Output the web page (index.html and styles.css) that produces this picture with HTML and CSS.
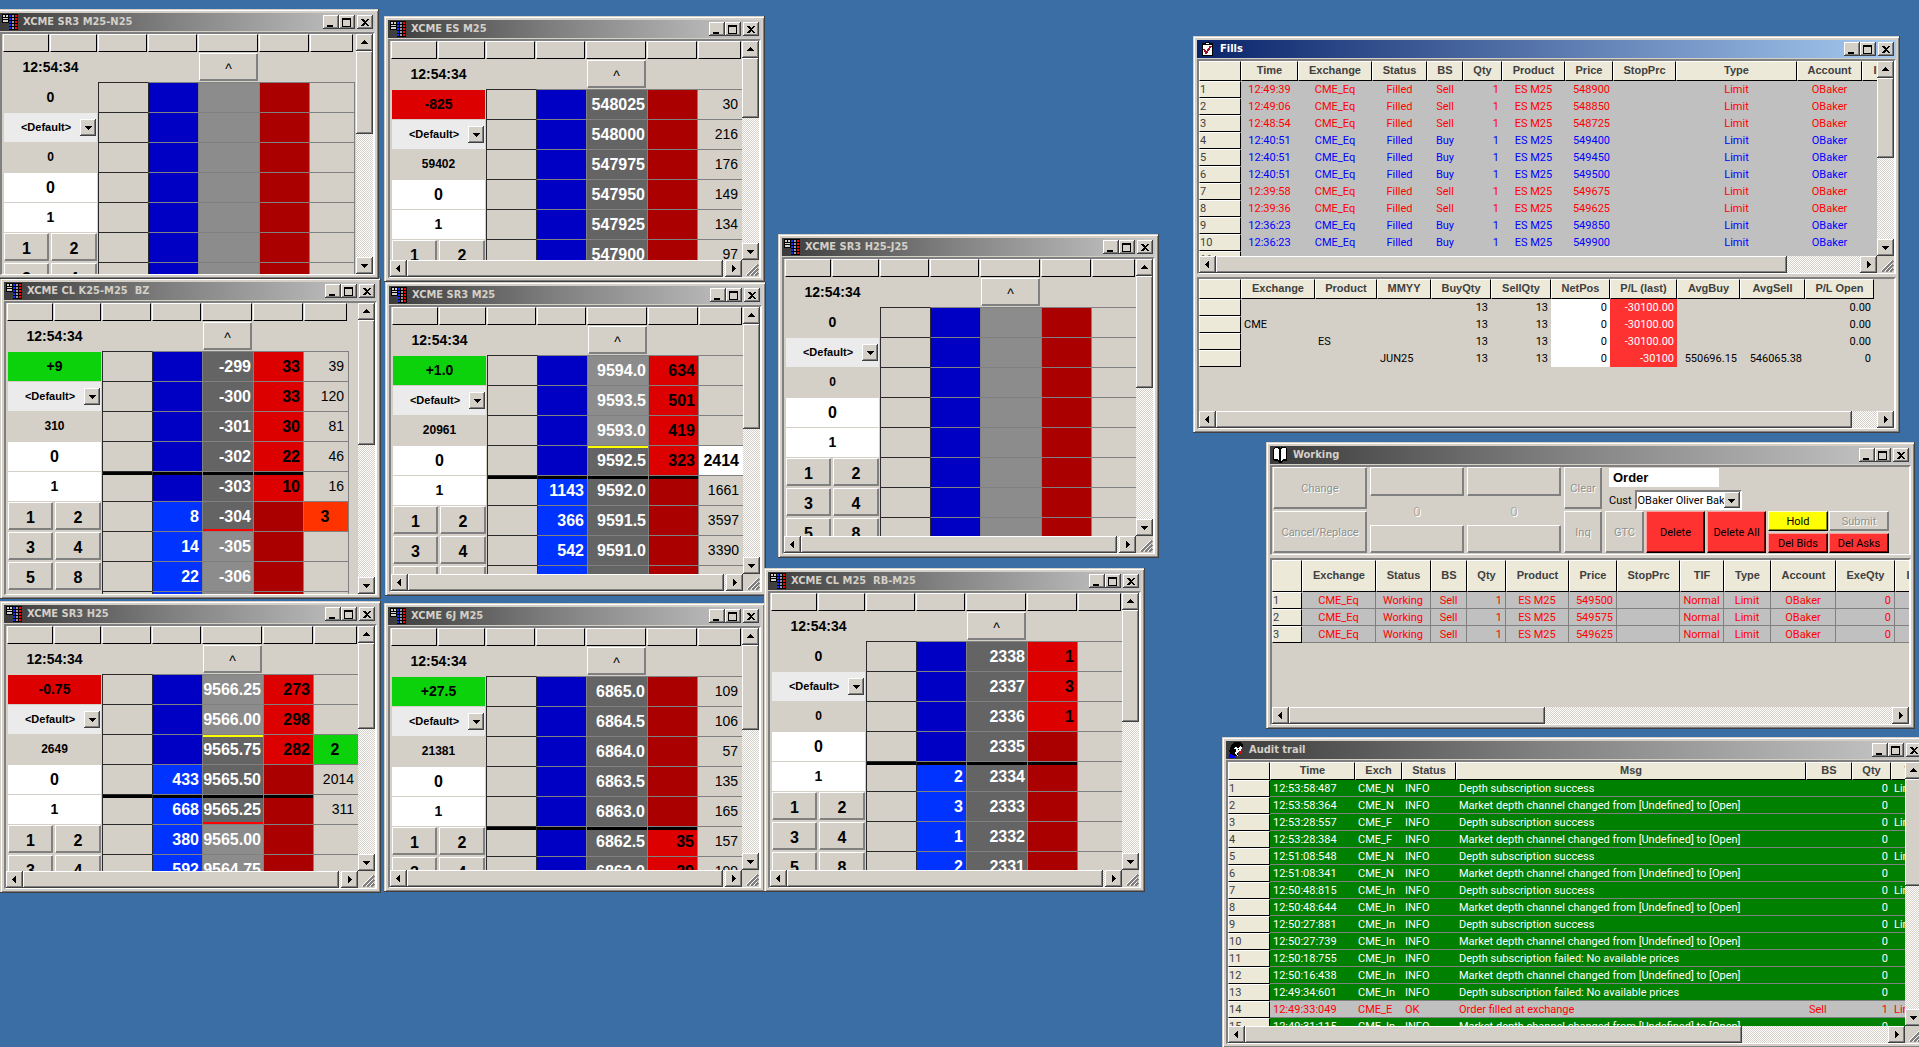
FILE: index.html
```html
<!DOCTYPE html>
<html lang="en">
<head>
<meta charset="utf-8">
<meta name="viewport" content="width=device-width, initial-scale=1">
<title>Trading desktop</title>
<link rel="stylesheet" href="styles.css">
</head>
<body>
<svg class="sprite" aria-hidden="true">
  <symbol id="i-ladder" viewBox="0 0 16 16">
    <path fill="#000" d="M0 0h7v9H0zM7 0h9v16H7z"/>
    <path fill="#d4d0c8" d="M1 1h2v2H1zM4 1h2v2H4zM1 4h5v1H1zM1 6h5v2H1z"/>
    <path fill="#1030ff" d="M7 1h2v2H7zM7 4h2v2H7zM7 7h2v2H7zM7 10h2v2H7zM7 13h2v2H7z"/>
    <path fill="#999" d="M10 1h2v2h-2zM10 4h2v2h-2zM10 7h2v2h-2zM10 10h2v2h-2zM10 13h2v2h-2z"/>
    <path fill="#f00" d="M13 1h2v2h-2zM13 4h2v2h-2zM13 7h2v2h-2zM13 10h2v2h-2zM13 13h2v2h-2z"/>
  </symbol>
  <symbol id="i-check" viewBox="0 0 16 16">
    <path fill="#000" d="M3 2h3V1h5v1h3v13H3z"/>
    <path fill="#fff" d="M4 4h9v10H4zM7 2h3v1H7z"/>
    <path fill="none" stroke="#a01020" stroke-width="2" d="M5 8l2 4 5-7"/>
  </symbol>
  <symbol id="i-book" viewBox="0 0 16 16">
    <path fill="#000" d="M1 2l2-2h4l1 1 1-1h4l2 2v11l-1 1h-3l-2 2H7l-2-2H2l-1-1z"/>
    <path fill="#fff" d="M2 2l1-1h3l1 2v11l-2-2H2zM14 2l-1-1h-3L9 3v11l2-2h3z"/>
  </symbol>
  <symbol id="i-sleuth" viewBox="0 0 16 16">
    <path fill="#000" d="M4 2l3-2h5l3 3-1 4-3 2-2 5H3L1 9z"/>
    <path fill="#fff" d="M6 6l2-1 2 1 2-2 2 1-1 4-3 1-1 2 1 2-2-1-1-2 1-2z"/>
    <path fill="#000" d="M7 7h1v2H7zM10 7h1v1h-1z"/>
    <path fill="#00f" d="M1 12l5 1 2 3H1z"/>
    <path fill="#e00" d="M11 9h3v3h-3z"/>
  </symbol>
  <symbol id="i-min" viewBox="0 0 10 10"><path d="M1 8h6v2H1z"/></symbol>
  <symbol id="i-max" viewBox="0 0 10 10"><path fill-rule="evenodd" d="M0 1h9v9H0zM1 3v6h7V3z"/></symbol>
  <symbol id="i-close" viewBox="0 0 10 10"><path d="M1 2h2l2 2 2-2h2L6 5.500l3 3.500H7L5 7 3 9H1l3-3.500z"/></symbol>
  <symbol id="i-up" viewBox="0 0 9 9"><path d="M1 6h7L4.500 2z"/></symbol>
  <symbol id="i-down" viewBox="0 0 9 9"><path d="M1 3h7L4.500 7z"/></symbol>
  <symbol id="i-left" viewBox="0 0 9 9"><path d="M6 1v7L2 4.500z"/></symbol>
  <symbol id="i-right" viewBox="0 0 9 9"><path d="M3 1v7l4-3.500z"/></symbol>
  <symbol id="i-grip" viewBox="0 0 14 14">
    <path stroke="#fff" d="M1 12L12 1M5 12l7-7M9 12l3-3"/>
    <path stroke="#808080" stroke-width="2" d="M2 13L13 2M6 13l7-7M10 13l3-3"/>
  </symbol>
</svg>

<main class="desktop">

<section class="win win-k25 ladder-narrow">
  <header class="titlebar"><svg class="app"><use href="#i-ladder"/></svg><h2>XCME CL K25-M25&nbsp; BZ</h2><div class="winbtns"><button aria-label="Minimize"><svg><use href="#i-min"/></svg></button><button aria-label="Maximize"><svg><use href="#i-max"/></svg></button><button aria-label="Close"><svg><use href="#i-close"/></svg></button></div></header>
  <div class="pane">
    <div class="view">
      <div class="colheads"><i></i><i></i><i></i><i></i><i></i><i></i><i></i></div>
      <div class="ladder">
        <div class="side"><div class="time">12:54:34</div><div class="chg up">+9</div>
          <label class="acct"><select aria-label="Account"><option>&lt;Default&gt;</option></select><span class="drop"><svg><use href="#i-down"/></svg></span></label>
          <div class="vol">310</div><div class="pos">0</div><div class="qty">1</div>
          <button>1</button><button>2</button><button>3</button><button>4</button><button>5</button><button>8</button></div>
        <table class="book">
          <colgroup><col class="c-a"><col class="c-b"><col class="c-p"><col class="c-s"><col class="c-v"></colgroup>
          <thead><tr><th></th><th></th><th><button>^</button></th><th></th><th></th></tr></thead>
          <tbody>
            <tr><td></td><td></td><td>-299</td><td class="on">33</td><td>39</td></tr>
            <tr><td></td><td></td><td>-300</td><td class="on">33</td><td>120</td></tr>
            <tr><td></td><td></td><td>-301</td><td class="on">30</td><td>81</td></tr>
            <tr><td></td><td></td><td>-302</td><td class="on">22</td><td>46</td></tr>
            <tr class="mark"><td></td><td></td><td>-303</td><td class="on">10</td><td>16</td></tr>
            <tr><td></td><td class="on">8</td><td class="low">-304</td><td></td><td class="last sold">3</td></tr>
            <tr><td></td><td class="on">14</td><td class="far">-305</td><td></td><td></td></tr>
            <tr><td></td><td class="on">22</td><td class="far">-306</td><td></td><td></td></tr>
            <tr><td></td><td class="on"></td><td class="far"></td><td></td><td></td></tr>
          </tbody>
        </table>
      </div>
    </div>
    <div class="vscroll"><button aria-label="Up"><svg><use href="#i-up"/></svg></button><span class="thumb" style="--len:125px"></span><button aria-label="Down"><svg><use href="#i-down"/></svg></button></div>
  </div>
</section>

<section class="win win-n25">
  <header class="titlebar"><svg class="app"><use href="#i-ladder"/></svg><h2>XCME SR3 M25-N25</h2><div class="winbtns"><button aria-label="Minimize"><svg><use href="#i-min"/></svg></button><button aria-label="Maximize"><svg><use href="#i-max"/></svg></button><button aria-label="Close"><svg><use href="#i-close"/></svg></button></div></header>
  <div class="pane">
    <div class="view">
      <div class="colheads"><i></i><i></i><i></i><i></i><i></i><i></i><i></i></div>
      <div class="ladder">
        <div class="side"><div class="time">12:54:34</div><div class="chg">0</div>
          <label class="acct"><select aria-label="Account"><option>&lt;Default&gt;</option></select><span class="drop"><svg><use href="#i-down"/></svg></span></label>
          <div class="vol">0</div><div class="pos">0</div><div class="qty">1</div>
          <button>1</button><button>2</button><button>3</button><button>4</button></div>
        <table class="book">
          <colgroup><col class="c-a"><col class="c-b"><col class="c-p"><col class="c-s"><col class="c-v"></colgroup>
          <thead><tr><th></th><th></th><th><button>^</button></th><th></th><th></th></tr></thead>
          <tbody>
            <tr><td></td><td></td><td class="far"></td><td></td><td></td></tr>
            <tr><td></td><td></td><td class="far"></td><td></td><td></td></tr>
            <tr><td></td><td></td><td class="far"></td><td></td><td></td></tr>
            <tr><td></td><td></td><td class="far"></td><td></td><td></td></tr>
            <tr><td></td><td></td><td class="far"></td><td></td><td></td></tr>
            <tr><td></td><td></td><td class="far"></td><td></td><td></td></tr>
            <tr><td></td><td></td><td class="far"></td><td></td><td></td></tr>
          </tbody>
        </table>
      </div>
    </div>
    <div class="vscroll"><button aria-label="Up"><svg><use href="#i-up"/></svg></button><span class="thumb" style="--len:83px"></span><button aria-label="Down"><svg><use href="#i-down"/></svg></button></div>
  </div>
</section>

<section class="win win-es">
  <header class="titlebar"><svg class="app"><use href="#i-ladder"/></svg><h2>XCME ES M25</h2><div class="winbtns"><button aria-label="Minimize"><svg><use href="#i-min"/></svg></button><button aria-label="Maximize"><svg><use href="#i-max"/></svg></button><button aria-label="Close"><svg><use href="#i-close"/></svg></button></div></header>
  <div class="pane">
    <div class="view">
      <div class="colheads"><i></i><i></i><i></i><i></i><i></i><i></i><i></i></div>
      <div class="ladder">
        <div class="side"><div class="time">12:54:34</div><div class="chg down">-825</div>
          <label class="acct"><select aria-label="Account"><option>&lt;Default&gt;</option></select><span class="drop"><svg><use href="#i-down"/></svg></span></label>
          <div class="vol">59402</div><div class="pos">0</div><div class="qty">1</div>
          <button>1</button><button>2</button></div>
        <table class="book">
          <colgroup><col class="c-a"><col class="c-b"><col class="c-p"><col class="c-s"><col class="c-v"></colgroup>
          <thead><tr><th></th><th></th><th><button>^</button></th><th></th><th></th></tr></thead>
          <tbody>
            <tr><td></td><td></td><td>548025</td><td></td><td>30</td></tr>
            <tr><td></td><td></td><td>548000</td><td></td><td>216</td></tr>
            <tr><td></td><td></td><td>547975</td><td></td><td>176</td></tr>
            <tr><td></td><td></td><td>547950</td><td></td><td>149</td></tr>
            <tr><td></td><td></td><td>547925</td><td></td><td>134</td></tr>
            <tr><td></td><td></td><td>547900</td><td></td><td>97</td></tr>
          </tbody>
        </table>
      </div>
    </div>
    <div class="vscroll"><button aria-label="Up"><svg><use href="#i-up"/></svg></button><span class="thumb" style="--len:60px"></span><button aria-label="Down"><svg><use href="#i-down"/></svg></button></div>
    <div class="hscroll"><button aria-label="Left"><svg><use href="#i-left"/></svg></button><span class="thumb full"></span><button aria-label="Right"><svg><use href="#i-right"/></svg></button></div>
    <svg class="grip"><use href="#i-grip"/></svg>
  </div>
</section>

<section class="win win-m25">
  <header class="titlebar"><svg class="app"><use href="#i-ladder"/></svg><h2>XCME SR3 M25</h2><div class="winbtns"><button aria-label="Minimize"><svg><use href="#i-min"/></svg></button><button aria-label="Maximize"><svg><use href="#i-max"/></svg></button><button aria-label="Close"><svg><use href="#i-close"/></svg></button></div></header>
  <div class="pane">
    <div class="view">
      <div class="colheads"><i></i><i></i><i></i><i></i><i></i><i></i><i></i></div>
      <div class="ladder">
        <div class="side"><div class="time">12:54:34</div><div class="chg up">+1.0</div>
          <label class="acct"><select aria-label="Account"><option>&lt;Default&gt;</option></select><span class="drop"><svg><use href="#i-down"/></svg></span></label>
          <div class="vol">20961</div><div class="pos">0</div><div class="qty">1</div>
          <button>1</button><button>2</button><button>3</button><button>4</button><button aria-label="5"></button><button aria-label="8"></button></div>
        <table class="book">
          <colgroup><col class="c-a"><col class="c-b"><col class="c-p"><col class="c-s"><col class="c-v"></colgroup>
          <thead><tr><th></th><th></th><th><button>^</button></th><th></th><th></th></tr></thead>
          <tbody>
            <tr><td></td><td></td><td class="far">9594.0</td><td class="on">634</td><td></td></tr>
            <tr><td></td><td></td><td class="far">9593.5</td><td class="on">501</td><td></td></tr>
            <tr><td></td><td></td><td class="far">9593.0</td><td class="on">419</td><td></td></tr>
            <tr><td></td><td></td><td class="high">9592.5</td><td class="on">323</td><td class="last same">2414</td></tr>
            <tr class="mark"><td></td><td class="on">1143</td><td>9592.0</td><td></td><td>1661</td></tr>
            <tr><td></td><td class="on">366</td><td>9591.5</td><td></td><td>3597</td></tr>
            <tr><td></td><td class="on">542</td><td>9591.0</td><td></td><td>3390</td></tr>
            <tr><td></td><td class="on"></td><td></td><td></td><td></td></tr>
          </tbody>
        </table>
      </div>
    </div>
    <div class="vscroll"><button aria-label="Up"><svg><use href="#i-up"/></svg></button><span class="thumb" style="--len:105px"></span><button aria-label="Down"><svg><use href="#i-down"/></svg></button></div>
    <div class="hscroll"><button aria-label="Left"><svg><use href="#i-left"/></svg></button><span class="thumb full"></span><button aria-label="Right"><svg><use href="#i-right"/></svg></button></div>
    <svg class="grip"><use href="#i-grip"/></svg>
  </div>
</section>

<section class="win win-h25">
  <header class="titlebar"><svg class="app"><use href="#i-ladder"/></svg><h2>XCME SR3 H25</h2><div class="winbtns"><button aria-label="Minimize"><svg><use href="#i-min"/></svg></button><button aria-label="Maximize"><svg><use href="#i-max"/></svg></button><button aria-label="Close"><svg><use href="#i-close"/></svg></button></div></header>
  <div class="pane">
    <div class="view">
      <div class="colheads"><i></i><i></i><i></i><i></i><i></i><i></i><i></i></div>
      <div class="ladder">
        <div class="side"><div class="time">12:54:34</div><div class="chg down">-0.75</div>
          <label class="acct"><select aria-label="Account"><option>&lt;Default&gt;</option></select><span class="drop"><svg><use href="#i-down"/></svg></span></label>
          <div class="vol">2649</div><div class="pos">0</div><div class="qty">1</div>
          <button>1</button><button>2</button><button>3</button><button>4</button></div>
        <table class="book">
          <colgroup><col class="c-a"><col class="c-b"><col class="c-p"><col class="c-s"><col class="c-v"></colgroup>
          <thead><tr><th></th><th></th><th><button>^</button></th><th></th><th></th></tr></thead>
          <tbody>
            <tr><td></td><td></td><td class="far">9566.25</td><td class="on">273</td><td></td></tr>
            <tr><td></td><td></td><td class="far">9566.00</td><td class="on">298</td><td></td></tr>
            <tr><td></td><td></td><td class="high">9565.75</td><td class="on">282</td><td class="last bought">2</td></tr>
            <tr><td></td><td class="on">433</td><td>9565.50</td><td></td><td>2014</td></tr>
            <tr class="mark"><td></td><td class="on">668</td><td class="low">9565.25</td><td></td><td>311</td></tr>
            <tr><td></td><td class="on">380</td><td class="far">9565.00</td><td></td><td></td></tr>
            <tr><td></td><td class="on">592</td><td class="far">9564.75</td><td></td><td></td></tr>
          </tbody>
        </table>
      </div>
    </div>
    <div class="vscroll"><button aria-label="Up"><svg><use href="#i-up"/></svg></button><span class="thumb" style="--len:86px"></span><button aria-label="Down"><svg><use href="#i-down"/></svg></button></div>
    <div class="hscroll"><button aria-label="Left"><svg><use href="#i-left"/></svg></button><span class="thumb full"></span><button aria-label="Right"><svg><use href="#i-right"/></svg></button></div>
    <svg class="grip"><use href="#i-grip"/></svg>
  </div>
</section>

<section class="win win-6j">
  <header class="titlebar"><svg class="app"><use href="#i-ladder"/></svg><h2>XCME 6J M25</h2><div class="winbtns"><button aria-label="Minimize"><svg><use href="#i-min"/></svg></button><button aria-label="Maximize"><svg><use href="#i-max"/></svg></button><button aria-label="Close"><svg><use href="#i-close"/></svg></button></div></header>
  <div class="pane">
    <div class="view">
      <div class="colheads"><i></i><i></i><i></i><i></i><i></i><i></i><i></i></div>
      <div class="ladder">
        <div class="side"><div class="time">12:54:34</div><div class="chg up">+27.5</div>
          <label class="acct"><select aria-label="Account"><option>&lt;Default&gt;</option></select><span class="drop"><svg><use href="#i-down"/></svg></span></label>
          <div class="vol">21381</div><div class="pos">0</div><div class="qty">1</div>
          <button>1</button><button>2</button><button>3</button><button>4</button></div>
        <table class="book">
          <colgroup><col class="c-a"><col class="c-b"><col class="c-p"><col class="c-s"><col class="c-v"></colgroup>
          <thead><tr><th></th><th></th><th><button>^</button></th><th></th><th></th></tr></thead>
          <tbody>
            <tr><td></td><td></td><td>6865.0</td><td></td><td>109</td></tr>
            <tr><td></td><td></td><td>6864.5</td><td></td><td>106</td></tr>
            <tr><td></td><td></td><td>6864.0</td><td></td><td>57</td></tr>
            <tr><td></td><td></td><td>6863.5</td><td></td><td>135</td></tr>
            <tr><td></td><td></td><td>6863.0</td><td></td><td>165</td></tr>
            <tr class="mark"><td></td><td></td><td>6862.5</td><td class="on">35</td><td>157</td></tr>
            <tr><td></td><td></td><td>6862.0</td><td class="on">39</td><td>199</td></tr>
          </tbody>
        </table>
      </div>
    </div>
    <div class="vscroll"><button aria-label="Up"><svg><use href="#i-up"/></svg></button><span class="thumb" style="--len:85px"></span><button aria-label="Down"><svg><use href="#i-down"/></svg></button></div>
    <div class="hscroll"><button aria-label="Left"><svg><use href="#i-left"/></svg></button><span class="thumb full"></span><button aria-label="Right"><svg><use href="#i-right"/></svg></button></div>
    <svg class="grip"><use href="#i-grip"/></svg>
  </div>
</section>

<section class="win win-j25">
  <header class="titlebar"><svg class="app"><use href="#i-ladder"/></svg><h2>XCME SR3 H25-J25</h2><div class="winbtns"><button aria-label="Minimize"><svg><use href="#i-min"/></svg></button><button aria-label="Maximize"><svg><use href="#i-max"/></svg></button><button aria-label="Close"><svg><use href="#i-close"/></svg></button></div></header>
  <div class="pane">
    <div class="view">
      <div class="colheads"><i></i><i></i><i></i><i></i><i></i><i></i><i></i></div>
      <div class="ladder">
        <div class="side"><div class="time">12:54:34</div><div class="chg">0</div>
          <label class="acct"><select aria-label="Account"><option>&lt;Default&gt;</option></select><span class="drop"><svg><use href="#i-down"/></svg></span></label>
          <div class="vol">0</div><div class="pos">0</div><div class="qty">1</div>
          <button>1</button><button>2</button><button>3</button><button>4</button><button>5</button><button>8</button></div>
        <table class="book">
          <colgroup><col class="c-a"><col class="c-b"><col class="c-p"><col class="c-s"><col class="c-v"></colgroup>
          <thead><tr><th></th><th></th><th><button>^</button></th><th></th><th></th></tr></thead>
          <tbody>
            <tr><td></td><td></td><td class="far"></td><td></td><td></td></tr>
            <tr><td></td><td></td><td class="far"></td><td></td><td></td></tr>
            <tr><td></td><td></td><td class="far"></td><td></td><td></td></tr>
            <tr><td></td><td></td><td class="far"></td><td></td><td></td></tr>
            <tr><td></td><td></td><td class="far"></td><td></td><td></td></tr>
            <tr><td></td><td></td><td class="far"></td><td></td><td></td></tr>
            <tr><td></td><td></td><td class="far"></td><td></td><td></td></tr>
            <tr><td></td><td></td><td class="far"></td><td></td><td></td></tr>
          </tbody>
        </table>
      </div>
    </div>
    <div class="vscroll"><button aria-label="Up"><svg><use href="#i-up"/></svg></button><span class="thumb" style="--len:112px"></span><button aria-label="Down"><svg><use href="#i-down"/></svg></button></div>
    <div class="hscroll"><button aria-label="Left"><svg><use href="#i-left"/></svg></button><span class="thumb full"></span><button aria-label="Right"><svg><use href="#i-right"/></svg></button></div>
    <svg class="grip"><use href="#i-grip"/></svg>
  </div>
</section>

<section class="win win-rb">
  <header class="titlebar"><svg class="app"><use href="#i-ladder"/></svg><h2>XCME CL M25&nbsp; RB-M25</h2><div class="winbtns"><button aria-label="Minimize"><svg><use href="#i-min"/></svg></button><button aria-label="Maximize"><svg><use href="#i-max"/></svg></button><button aria-label="Close"><svg><use href="#i-close"/></svg></button></div></header>
  <div class="pane">
    <div class="view">
      <div class="colheads"><i></i><i></i><i></i><i></i><i></i><i></i><i></i></div>
      <div class="ladder">
        <div class="side"><div class="time">12:54:34</div><div class="chg">0</div>
          <label class="acct"><select aria-label="Account"><option>&lt;Default&gt;</option></select><span class="drop"><svg><use href="#i-down"/></svg></span></label>
          <div class="vol">0</div><div class="pos">0</div><div class="qty">1</div>
          <button>1</button><button>2</button><button>3</button><button>4</button><button>5</button><button>8</button></div>
        <table class="book">
          <colgroup><col class="c-a"><col class="c-b"><col class="c-p"><col class="c-s"><col class="c-v"></colgroup>
          <thead><tr><th></th><th></th><th><button>^</button></th><th></th><th></th></tr></thead>
          <tbody>
            <tr><td></td><td></td><td>2338</td><td class="on">1</td><td></td></tr>
            <tr><td></td><td></td><td>2337</td><td class="on">3</td><td></td></tr>
            <tr><td></td><td></td><td>2336</td><td class="on">1</td><td></td></tr>
            <tr><td></td><td></td><td>2335</td><td></td><td></td></tr>
            <tr class="mark"><td></td><td class="on">2</td><td>2334</td><td></td><td></td></tr>
            <tr><td></td><td class="on">3</td><td>2333</td><td></td><td></td></tr>
            <tr><td></td><td class="on">1</td><td>2332</td><td></td><td></td></tr>
            <tr><td></td><td class="on">2</td><td>2331</td><td></td><td></td></tr>
          </tbody>
        </table>
      </div>
    </div>
    <div class="vscroll"><button aria-label="Up"><svg><use href="#i-up"/></svg></button><span class="thumb" style="--len:112px"></span><button aria-label="Down"><svg><use href="#i-down"/></svg></button></div>
    <div class="hscroll"><button aria-label="Left"><svg><use href="#i-left"/></svg></button><span class="thumb full"></span><button aria-label="Right"><svg><use href="#i-right"/></svg></button></div>
    <svg class="grip"><use href="#i-grip"/></svg>
  </div>
</section>

<section class="win win-fills">
  <header class="titlebar active"><svg class="app"><use href="#i-check"/></svg><h2>Fills</h2><div class="winbtns"><button aria-label="Minimize"><svg><use href="#i-min"/></svg></button><button aria-label="Maximize"><svg><use href="#i-max"/></svg></button><button aria-label="Close"><svg><use href="#i-close"/></svg></button></div></header>
  <div class="pane fills-pane">
    <div class="view silver">
      <table class="data t-fills">
        <colgroup><col class="w42"><col class="w57"><col class="w74"><col class="w55"><col class="w36"><col class="w39"><col class="w63"><col class="w48"><col class="w63"><col class="w121"><col class="w65"><col class="w34"></colgroup>
        <thead><tr><th></th><th>Time</th><th>Exchange</th><th>Status</th><th>BS</th><th>Qty</th><th>Product</th><th>Price</th><th>StopPrc</th><th>Type</th><th>Account</th><th>ID</th></tr></thead>
        <tbody>
          <tr class="sell"><th>1</th><td>12:49:39</td><td>CME_Eq</td><td>Filled</td><td>Sell</td><td class="r">1</td><td>ES M25</td><td class="r">548900</td><td></td><td>Limit</td><td>OBaker</td><td></td></tr>
          <tr class="sell"><th>2</th><td>12:49:06</td><td>CME_Eq</td><td>Filled</td><td>Sell</td><td class="r">1</td><td>ES M25</td><td class="r">548850</td><td></td><td>Limit</td><td>OBaker</td><td></td></tr>
          <tr class="sell"><th>3</th><td>12:48:54</td><td>CME_Eq</td><td>Filled</td><td>Sell</td><td class="r">1</td><td>ES M25</td><td class="r">548725</td><td></td><td>Limit</td><td>OBaker</td><td></td></tr>
          <tr class="buy"><th>4</th><td>12:40:51</td><td>CME_Eq</td><td>Filled</td><td>Buy</td><td class="r">1</td><td>ES M25</td><td class="r">549400</td><td></td><td>Limit</td><td>OBaker</td><td></td></tr>
          <tr class="buy"><th>5</th><td>12:40:51</td><td>CME_Eq</td><td>Filled</td><td>Buy</td><td class="r">1</td><td>ES M25</td><td class="r">549450</td><td></td><td>Limit</td><td>OBaker</td><td></td></tr>
          <tr class="buy"><th>6</th><td>12:40:51</td><td>CME_Eq</td><td>Filled</td><td>Buy</td><td class="r">1</td><td>ES M25</td><td class="r">549500</td><td></td><td>Limit</td><td>OBaker</td><td></td></tr>
          <tr class="sell"><th>7</th><td>12:39:58</td><td>CME_Eq</td><td>Filled</td><td>Sell</td><td class="r">1</td><td>ES M25</td><td class="r">549675</td><td></td><td>Limit</td><td>OBaker</td><td></td></tr>
          <tr class="sell"><th>8</th><td>12:39:36</td><td>CME_Eq</td><td>Filled</td><td>Sell</td><td class="r">1</td><td>ES M25</td><td class="r">549625</td><td></td><td>Limit</td><td>OBaker</td><td></td></tr>
          <tr class="buy"><th>9</th><td>12:36:23</td><td>CME_Eq</td><td>Filled</td><td>Buy</td><td class="r">1</td><td>ES M25</td><td class="r">549850</td><td></td><td>Limit</td><td>OBaker</td><td></td></tr>
          <tr class="buy"><th>10</th><td>12:36:23</td><td>CME_Eq</td><td>Filled</td><td>Buy</td><td class="r">1</td><td>ES M25</td><td class="r">549900</td><td></td><td>Limit</td><td>OBaker</td><td></td></tr>
          <tr><th>11</th><td></td><td></td><td></td><td></td><td></td><td></td><td></td><td></td><td></td><td></td><td></td></tr>
        </tbody>
      </table>
    </div>
    <div class="vscroll"><button aria-label="Up"><svg><use href="#i-up"/></svg></button><span class="thumb" style="--len:80px"></span><button aria-label="Down"><svg><use href="#i-down"/></svg></button></div>
    <div class="hscroll"><button aria-label="Left"><svg><use href="#i-left"/></svg></button><span class="thumb" style="--len:571px"></span><button aria-label="Right"><svg><use href="#i-right"/></svg></button></div>
    <svg class="grip"><use href="#i-grip"/></svg>
  </div>
  <div class="pane pane-wide">
    <div class="view">
      <table class="data t-pl">
        <colgroup><col class="w42"><col class="w74"><col class="w62"><col class="w54"><col class="w60"><col class="w60"><col class="w59"><col class="w67"><col class="w63"><col class="w65"><col class="w69"></colgroup>
        <thead><tr><th></th><th>Exchange</th><th>Product</th><th>MMYY</th><th>BuyQty</th><th>SellQty</th><th>NetPos</th><th>P/L (last)</th><th>AvgBuy</th><th>AvgSell</th><th>P/L Open</th></tr></thead>
        <tbody>
          <tr><th></th><td></td><td></td><td></td><td>13</td><td>13</td><td class="net">0</td><td class="loss">-30100.00</td><td></td><td></td><td>0.00</td></tr>
          <tr><th></th><td class="l">CME</td><td></td><td></td><td>13</td><td>13</td><td class="net">0</td><td class="loss">-30100.00</td><td></td><td></td><td>0.00</td></tr>
          <tr><th></th><td></td><td class="l">ES</td><td></td><td>13</td><td>13</td><td class="net">0</td><td class="loss">-30100.00</td><td></td><td></td><td>0.00</td></tr>
          <tr><th></th><td></td><td></td><td class="l">JUN25</td><td>13</td><td>13</td><td class="net">0</td><td class="loss">-30100</td><td>550696.15</td><td>546065.38</td><td>0</td></tr>
        </tbody>
      </table>
    </div>
    <div class="hscroll"><button aria-label="Left"><svg><use href="#i-left"/></svg></button><span class="thumb" style="--len:636px"></span><button aria-label="Right"><svg><use href="#i-right"/></svg></button></div>
  </div>
</section>

<section class="win win-working">
  <header class="titlebar"><svg class="app"><use href="#i-book"/></svg><h2>Working</h2><div class="winbtns"><button aria-label="Minimize"><svg><use href="#i-min"/></svg></button><button aria-label="Maximize"><svg><use href="#i-max"/></svg></button><button aria-label="Close"><svg><use href="#i-close"/></svg></button></div></header>
  <div class="toolbar">
    <div class="stack wide"><button disabled>Change</button><button disabled>Cancel/Replace</button></div>
    <div class="stack wide spin"><button disabled aria-label="Price up"></button><output>0</output><button disabled aria-label="Price down"></button></div>
    <div class="stack wide spin"><button disabled aria-label="Quantity up"></button><output>0</output><button disabled aria-label="Quantity down"></button></div>
    <div class="stack slim"><button disabled>Clear</button><button disabled>Inq</button></div>
    <div class="order">
      <input class="order-name" aria-label="Order" value="Order">
      <div class="cust"><label for="cust">Cust</label>
        <span class="combo"><select id="cust"><option>OBaker Oliver Baker</option></select><span class="drop"><svg><use href="#i-down"/></svg></span></span></div>
      <div class="actions">
        <button class="gtc" disabled>GTC</button>
        <button class="danger">Delete</button>
        <button class="danger">Delete All</button>
        <div class="quad"><button class="hold">Hold</button><button disabled>Submit</button><button class="danger">Del Bids</button><button class="danger">Del Asks</button></div>
      </div>
    </div>
  </div>
  <div class="pane pane-wide">
    <div class="view">
      <table class="data ruled t-working">
        <colgroup><col class="w30"><col class="w74"><col class="w55"><col class="w36"><col class="w39"><col class="w63"><col class="w48"><col class="w63"><col class="w44"><col class="w47"><col class="w65"><col class="w59"><col class="w34"></colgroup>
        <thead><tr><th></th><th>Exchange</th><th>Status</th><th>BS</th><th>Qty</th><th>Product</th><th>Price</th><th>StopPrc</th><th>TIF</th><th>Type</th><th>Account</th><th>ExeQty</th><th>ID</th></tr></thead>
        <tbody>
          <tr class="sell"><th>1</th><td>CME_Eq</td><td>Working</td><td>Sell</td><td class="r">1</td><td>ES M25</td><td class="r">549500</td><td></td><td>Normal</td><td>Limit</td><td>OBaker</td><td class="r">0</td><td></td></tr>
          <tr class="sell"><th>2</th><td>CME_Eq</td><td>Working</td><td>Sell</td><td class="r">1</td><td>ES M25</td><td class="r">549575</td><td></td><td>Normal</td><td>Limit</td><td>OBaker</td><td class="r">0</td><td></td></tr>
          <tr class="sell"><th>3</th><td>CME_Eq</td><td>Working</td><td>Sell</td><td class="r">1</td><td>ES M25</td><td class="r">549625</td><td></td><td>Normal</td><td>Limit</td><td>OBaker</td><td class="r">0</td><td></td></tr>
        </tbody>
      </table>
    </div>
    <div class="hscroll"><button aria-label="Left"><svg><use href="#i-left"/></svg></button><span class="thumb" style="--len:256px"></span><button aria-label="Right"><svg><use href="#i-right"/></svg></button></div>
  </div>
</section>

<section class="win win-audit">
  <header class="titlebar"><svg class="app"><use href="#i-sleuth"/></svg><h2>Audit trail</h2><div class="winbtns"><button aria-label="Minimize"><svg><use href="#i-min"/></svg></button><button aria-label="Maximize"><svg><use href="#i-max"/></svg></button><button aria-label="Close"><svg><use href="#i-close"/></svg></button></div></header>
  <div class="pane">
    <div class="view">
      <table class="data ruled t-audit">
        <colgroup><col class="w42"><col class="w85"><col class="w47"><col class="w54"><col class="w350"><col class="w46"><col class="w39"><col class="w52"></colgroup>
        <thead><tr><th></th><th>Time</th><th>Exch</th><th>Status</th><th>Msg</th><th>BS</th><th>Qty</th><th>Type</th></tr></thead>
        <tbody>
          <tr><th>1</th><td>12:53:58:487</td><td>CME_N</td><td>INFO</td><td>Depth subscription success</td><td></td><td class="r">0</td><td>Limit</td></tr>
          <tr><th>2</th><td>12:53:58:364</td><td>CME_N</td><td>INFO</td><td>Market depth channel changed from [Undefined] to [Open]</td><td></td><td class="r">0</td><td></td></tr>
          <tr><th>3</th><td>12:53:28:557</td><td>CME_F</td><td>INFO</td><td>Depth subscription success</td><td></td><td class="r">0</td><td>Limit</td></tr>
          <tr><th>4</th><td>12:53:28:384</td><td>CME_F</td><td>INFO</td><td>Market depth channel changed from [Undefined] to [Open]</td><td></td><td class="r">0</td><td></td></tr>
          <tr><th>5</th><td>12:51:08:548</td><td>CME_N</td><td>INFO</td><td>Depth subscription success</td><td></td><td class="r">0</td><td>Limit</td></tr>
          <tr><th>6</th><td>12:51:08:341</td><td>CME_N</td><td>INFO</td><td>Market depth channel changed from [Undefined] to [Open]</td><td></td><td class="r">0</td><td></td></tr>
          <tr><th>7</th><td>12:50:48:815</td><td>CME_In</td><td>INFO</td><td>Depth subscription success</td><td></td><td class="r">0</td><td>Limit</td></tr>
          <tr><th>8</th><td>12:50:48:644</td><td>CME_In</td><td>INFO</td><td>Market depth channel changed from [Undefined] to [Open]</td><td></td><td class="r">0</td><td></td></tr>
          <tr><th>9</th><td>12:50:27:881</td><td>CME_In</td><td>INFO</td><td>Depth subscription success</td><td></td><td class="r">0</td><td>Limit</td></tr>
          <tr><th>10</th><td>12:50:27:739</td><td>CME_In</td><td>INFO</td><td>Market depth channel changed from [Undefined] to [Open]</td><td></td><td class="r">0</td><td></td></tr>
          <tr><th>11</th><td>12:50:18:755</td><td>CME_In</td><td>INFO</td><td>Depth subscription failed: No available prices</td><td></td><td class="r">0</td><td></td></tr>
          <tr><th>12</th><td>12:50:16:438</td><td>CME_In</td><td>INFO</td><td>Market depth channel changed from [Undefined] to [Open]</td><td></td><td class="r">0</td><td></td></tr>
          <tr><th>13</th><td>12:49:34:601</td><td>CME_In</td><td>INFO</td><td>Depth subscription failed: No available prices</td><td></td><td class="r">0</td><td></td></tr>
          <tr class="sell"><th>14</th><td>12:49:33:049</td><td>CME_E</td><td>OK</td><td>Order filled at exchange</td><td>Sell</td><td class="r">1</td><td>Limit</td></tr>
          <tr><th>15</th><td>12:49:31:115</td><td>CME_In</td><td>INFO</td><td>Market depth channel changed from [Undefined] to [Open]</td><td></td><td class="r">0</td><td></td></tr>
        </tbody>
      </table>
    </div>
    <div class="vscroll"><button aria-label="Up"><svg><use href="#i-up"/></svg></button><span class="thumb" style="--len:107px"></span><button aria-label="Down"><svg><use href="#i-down"/></svg></button></div>
    <div class="hscroll"><button aria-label="Left"><svg><use href="#i-left"/></svg></button><span class="thumb" style="--len:497px"></span><button aria-label="Right"><svg><use href="#i-right"/></svg></button></div>
    <svg class="grip"><use href="#i-grip"/></svg>
  </div>
</section>

</main>
</body>
</html>
```
FILE: styles.css
```css
:root {
  --face: #d4d0c8;
  --shadow: #808080;
  --dark: #404040;
  --head: #ece9d8;
  --raised: inset -1px -1px var(--dark), inset 1px 1px #fff, inset -2px -2px var(--shadow);
  --num: "Liberation Sans", Arial, sans-serif;
  --grid: Roboto, "Liberation Sans", sans-serif;
}

* { box-sizing: border-box; }

body {
  margin: 0;
  background: #3a6ea5;
  font: 11px/13px var(--grid);
  color: #000;
  overflow: hidden;
}

.sprite { display: none; }

.desktop {
  position: relative;
  min-height: 100vh;
  overflow: hidden;
}

button, input, select {
  font: inherit;
  color: inherit;
  margin: 0;
  padding: 0;
  border: 0;
  border-radius: 0;
  background: var(--face);
  appearance: none;
}

svg { display: block; shape-rendering: crispEdges; }

/* Window frame */
.win {
  position: absolute;
  display: flex;
  flex-direction: column;
  padding: 4px;
  background: var(--face);
  box-shadow: inset -1px -1px var(--dark), inset 1px 1px var(--face), inset 2px 2px #fff, inset -2px -2px var(--shadow);
}

.win-n25 { left: -4px; top: 9px; width: 383px; height: 270px; }
.win-k25 { left: 0; top: 278px; width: 381px; height: 321px; }
.win-es { left: 384px; top: 16px; width: 381px; height: 266px; }
.win-m25 { left: 385px; top: 282px; width: 381px; height: 314px; }
.win-h25 { left: 0; top: 601px; width: 381px; height: 292px; }
.win-6j { left: 384px; top: 603px; width: 381px; height: 289px; }
.win-j25 { left: 778px; top: 234px; width: 381px; height: 324px; }
.win-rb { left: 764px; top: 568px; width: 381px; height: 324px; }
.win-fills { left: 1193px; top: 36px; width: 707px; height: 397px; }
.win-working { left: 1266px; top: 442px; width: 649px; height: 287px; }
.win-audit { left: 1222px; top: 737px; width: 706px; height: 311px; }

.titlebar {
  display: flex;
  flex: none;
  align-items: center;
  height: 18px;
  margin-bottom: 1px;
  padding: 0 2px;
  background: linear-gradient(90deg, #3c3c3c, #808080 45%, #c8c8c8);
  color: var(--face);
}
.titlebar.active { background: linear-gradient(90deg, #0a246a, #a6caf0); color: #fff; }
.titlebar h2 {
  flex: 1;
  margin: 0 0 0 5px;
  font: bold 11px/16px "DejaVu Sans Condensed", "DejaVu Sans", sans-serif;
}
.app { width: 16px; height: 16px; }

.winbtns { display: flex; }
.winbtns button {
  display: grid;
  place-items: center;
  width: 16px;
  height: 14px;
  box-shadow: var(--raised);
}
.winbtns button:last-child { margin-left: 2px; }
.winbtns svg { width: 10px; height: 10px; }

/* Scrolled pane: content, scroll bars and size grip */
.pane {
  flex: 1;
  min-height: 0;
  display: grid;
  grid-template: minmax(0, 1fr) auto / minmax(0, 1fr) 17px;
  border: 2px solid;
  border-color: var(--shadow) #fff #fff var(--shadow);
  border-bottom-width: 1px;
}
.pane-wide { grid-template-columns: minmax(0, 1fr); }
.fills-pane { flex: none; height: 215px; margin-bottom: 3px; }
.view { overflow: hidden; }
.silver { background: #c0c0c0; }

.vscroll, .hscroll {
  display: flex;
  background: repeating-conic-gradient(#fff 0 25%, var(--face) 0 50%) 0 0 / 2px 2px;
}
.vscroll { flex-direction: column; }
.vscroll button, .hscroll button {
  flex: none;
  display: grid;
  place-items: center;
  width: 17px;
  height: 17px;
  box-shadow: var(--raised);
}
.vscroll svg, .hscroll svg { width: 9px; height: 9px; }
.vscroll button:last-child { margin-top: auto; }
.hscroll button:last-child { margin-left: auto; }
.thumb { background: var(--face); box-shadow: var(--raised); }
.vscroll .thumb { height: var(--len); }
.hscroll .thumb { width: var(--len); }
.hscroll .full { flex: 1; margin-right: 2px; }
.grip { width: 14px; height: 14px; place-self: end; }

/* Price ladder */
.colheads {
  display: grid;
  grid-template-columns: 46px 47px 49px 49px var(--pc, 60px) 50px 43px;
  column-gap: 1px;
  height: 19px;
  padding: 0 0 1px 1px;
}
.colheads i {
  border: 1px solid;
  border-color: #fff #000 #000 #fff;
}
.ladder-narrow { --pc: 50px; }

.ladder {
  display: flex;
  padding-left: 2px;
  font-family: var(--num);
  font-weight: bold;
}
.side {
  display: grid;
  grid-template-columns: 45px 46px;
  grid-auto-rows: 29px;
  gap: 1px 2px;
  flex: none;
  margin-right: 1px;
  align-content: start;
  text-align: center;
  line-height: 29px;
}
.side > div, .acct { grid-column: span 2; }
.time, .chg, .qty { font-size: 14px; }
.vol { font-size: 12px; }
.pos { font-size: 16px; }
.pos, .qty { background: #fff; }
.up { background: #0cd20c; }
.down { background: #d00; }
.side button, .book button {
  height: 28px;
  font-size: 16px;
  font-weight: bold;
  border: 1px solid;
  border-color: #fff var(--shadow) var(--shadow) #fff;
  box-shadow: inset -1px -1px var(--shadow);
}

.acct { position: relative; }
.acct select {
  display: block;
  width: 100%;
  height: 29px;
  padding-right: 9px;
  background: #ebebeb;
  font-size: 11px;
  font-weight: bold;
  text-align: center;
  text-align-last: center;
}
.drop {
  position: absolute;
  right: 1px;
  top: 6px;
  display: grid;
  place-items: center;
  width: 16px;
  height: 17px;
  background: var(--face);
  box-shadow: var(--raised);
  pointer-events: none;
}
.drop svg { width: 9px; height: 9px; }

.book {
  flex: none;
  width: calc(197px + var(--pc, 60px));
  table-layout: fixed;
  border-spacing: 0;
  align-self: start;
}
.c-a, .c-b, .c-s { width: 50px; }
.c-v { width: 46px; }
.book th { height: 29px; padding: 0 1px; vertical-align: top; }
.book button { display: block; width: 100%; padding-top: 4px; font-size: 14px; font-weight: normal; line-height: 22px; }
.book td {
  height: 30px;
  padding: 0 2px;
  border: solid var(--shadow);
  border-width: 1px 0 0 1px;
  text-align: right;
  font-size: 16px;
  line-height: 29px;
}
.book td:nth-child(1) { border-color: #2a2a2a; }
.book td:nth-child(2) { background: #0000c4; color: #fff; padding-right: 3px; border-left-color: #2a2a2a; }
.book td:nth-child(2).on { background: #03f; }
.book td:nth-child(3) { background: #646464; color: #fff; padding-left: 0; }
.book td:nth-child(3).far { background: #8c8c8c; }
.book td:nth-child(4) { background: #a00; padding-right: 3px; }
.book td:nth-child(4).on { background: #d00; }
.book td:nth-child(5) { padding-right: 4px; border-right-width: 1px; font-size: 14px; font-weight: normal; }
.book td:nth-child(5).last { font-size: 16px; font-weight: bold; }
.same { background: #fff; }
.sold { background: #f30; }
.bought { background: #0cd20c; }
.book .sold, .book .bought { text-align: center; }
.book .high { box-shadow: inset 0 2px #ff0; }
.book .low { box-shadow: inset 0 -2px #f00; }
.mark td:nth-child(-n+4) { box-shadow: inset 0 3px #000; }
.mark td.low:nth-child(3) { box-shadow: inset 0 3px #000, inset 0 -2px #f00; }

/* Data grids */
.data {
  width: 100%;
  table-layout: fixed;
  border-spacing: 0;
  white-space: nowrap;
}
.t-fills { width: 697px; }
.t-pl { width: 675px; }
.t-working { width: 657px; }
.t-audit { width: 715px; }
.w30 { width: 30px; }
.w34 { width: 34px; }
.w36 { width: 36px; }
.w39 { width: 39px; }
.w42 { width: 42px; }
.w44 { width: 44px; }
.w46 { width: 46px; }
.w47 { width: 47px; }
.w48 { width: 48px; }
.w52 { width: 52px; }
.w54 { width: 54px; }
.w55 { width: 55px; }
.w57 { width: 57px; }
.w59 { width: 59px; }
.w60 { width: 60px; }
.w62 { width: 62px; }
.w63 { width: 63px; }
.w65 { width: 65px; }
.w67 { width: 67px; }
.w69 { width: 69px; }
.w74 { width: 74px; }
.w85 { width: 85px; }
.w121 { width: 121px; }
.w350 { width: 350px; }

.data th {
  padding: 0;
  background: var(--head);
  border: 1px solid;
  border-color: #fff #000 #000 #fff;
  color: var(--dark);
}
.data thead th { height: 20px; padding-bottom: 2px; font: bold 11px/14px var(--num); }
.data tbody th { height: 17px; font-weight: normal; text-align: left; line-height: 14px; }
.data td {
  height: 17px;
  padding: 0 3px;
  overflow: hidden;
  text-align: center;
  line-height: 15px;
}
.data .r, .t-pl td { text-align: right; }
.t-pl .l { text-align: left; }
.net { background: #fff; }
.loss { background: #ff3232; color: #fff; }
.sell { color: #f00; }
.buy { color: #00f; }

.ruled td { border: solid var(--shadow); border-width: 0 1px 1px 0; background: #c0c0c0; }
.t-working thead th { height: 32px; }
.t-audit thead th { height: 18px; }
.t-audit td { border-right: 0; background: #008000; color: #fff; text-align: left; }
.t-audit .sell td { background: #c0c0c0; color: #f00; }

/* Order entry toolbar */
.toolbar {
  display: flex;
  flex: none;
  gap: 3px;
  height: 90px;
  margin-bottom: 3px;
  padding: 0 0 1px 1px;
  border: 2px solid;
  border-color: var(--shadow) #fff #fff var(--shadow);
  border-bottom-width: 1px;
}
.toolbar button {
  border: 1px solid;
  border-color: #fff var(--shadow) var(--shadow) #fff;
  box-shadow: inset -1px -1px var(--shadow);
}
.toolbar button:disabled, .toolbar output { color: #909090; text-shadow: 1px 1px #fff; }
.stack { display: grid; grid-template-rows: 42px 42px; gap: 2px; flex: none; }
.wide { width: 94px; }
.slim { width: 38px; }
.spin { grid-template-rows: 29px 1fr 28px; gap: 0; }
.toolbar .spin output { place-self: center; padding-top: 2px; font-size: 13px; color: #b0aca4; }

.order { display: flex; flex-direction: column; }
.order-name {
  width: 110px;
  height: 19px;
  margin: 1px 0 3px 4px;
  padding: 0 4px;
  background: #fff;
  font: bold 13px/17px var(--num);
}
.cust { display: flex; align-items: center; gap: 3px; height: 20px; margin: 0 0 1px 4px; }
.combo {
  position: relative;
  width: 107px;
  height: 20px;
  border: 2px solid;
  border-color: var(--shadow) #fff #fff var(--shadow);
}
.combo select { display: block; width: 100%; height: 16px; padding: 0 16px 0 1px; background: #fff; overflow: hidden; }
.combo .drop { top: 0; right: 0; height: 16px; }
.actions { display: flex; gap: 2px; height: 42px; }
.actions > button { width: 59px; }
.actions > .gtc { width: 39px; }
.toolbar .danger, .toolbar .hold { border-color: #ff9c9c #000 #000 #ff9c9c; box-shadow: inset -1px -1px #700; }
.toolbar .danger { background: #ff3232; }
.toolbar .hold { background: #ff0; border-color: #ffc #000 #000 #ffc; box-shadow: inset -1px -1px #880; }
.quad { display: grid; grid-template: 20px 20px / 60px 60px; gap: 2px 1px; }
```
